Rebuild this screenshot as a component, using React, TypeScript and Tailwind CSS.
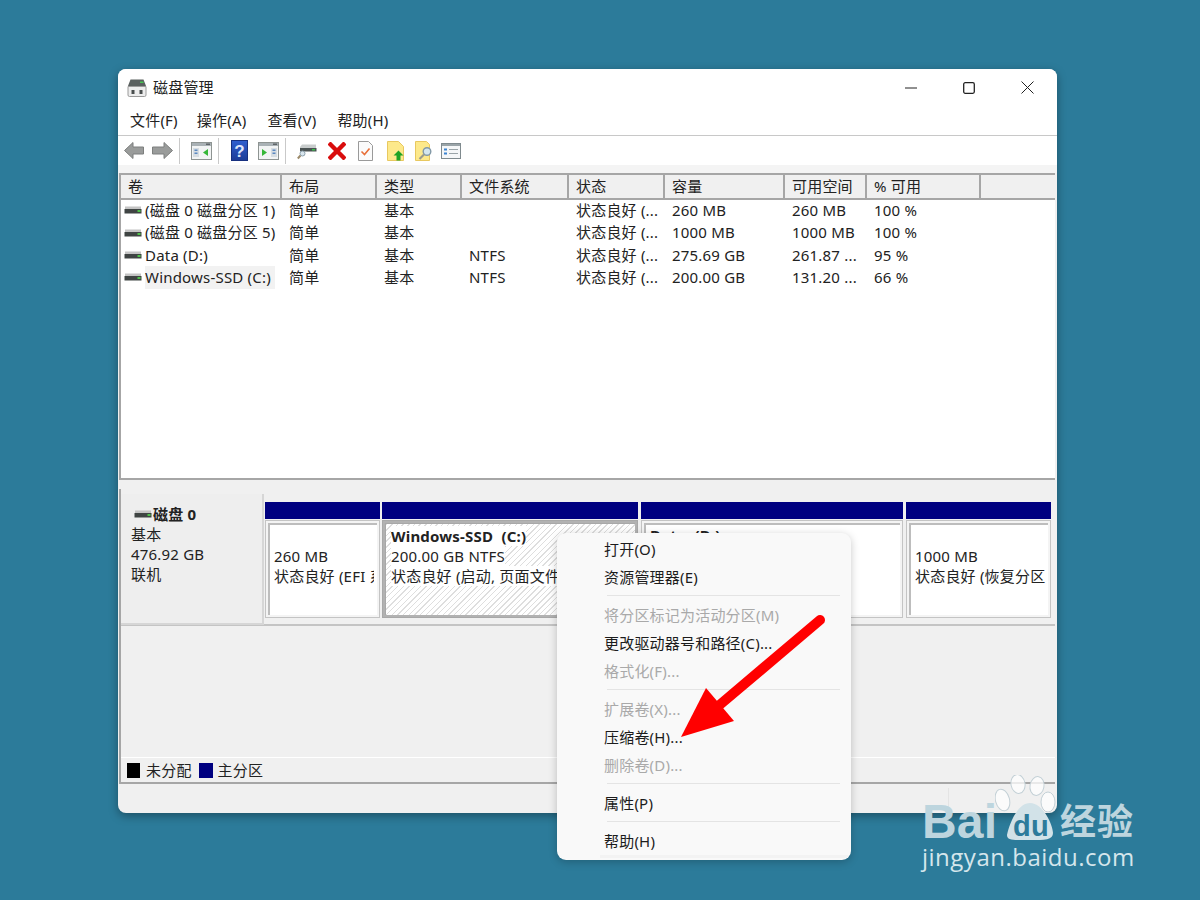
import React from 'react';

const columns = [
  { label: '卷', width: 'w-[161px]' },
  { label: '布局', width: 'w-[95px]' },
  { label: '类型', width: 'w-[85px]' },
  { label: '文件系统', width: 'w-[107px]' },
  { label: '状态', width: 'w-[96px]' },
  { label: '容量', width: 'w-[120px]' },
  { label: '可用空间', width: 'w-[82px]' },
  { label: '% 可用', width: 'w-[114px]' },
  { label: '', width: 'flex-1' },
];

const rows = [
  ['(磁盘 0 磁盘分区 1)', '简单', '基本', '', '状态良好 (...', '260 MB', '260 MB', '100 %'],
  ['(磁盘 0 磁盘分区 5)', '简单', '基本', '', '状态良好 (...', '1000 MB', '1000 MB', '100 %'],
  ['Data (D:)', '简单', '基本', 'NTFS', '状态良好 (...', '275.69 GB', '261.87 ...', '95 %'],
  ['Windows-SSD (C:)', '简单', '基本', 'NTFS', '状态良好 (...', '200.00 GB', '131.20 ...', '66 %'],
];

const menuGroups = [
  [
    { label: '打开(O)' },
    { label: '资源管理器(E)' },
  ],
  [
    { label: '将分区标记为活动分区(M)', disabled: true },
    { label: '更改驱动器号和路径(C)...' },
    { label: '格式化(F)...', disabled: true },
  ],
  [
    { label: '扩展卷(X)...', disabled: true },
    { label: '压缩卷(H)...' },
    { label: '删除卷(D)...', disabled: true },
  ],
  [{ label: '属性(P)' }],
  [{ label: '帮助(H)' }],
];

const DriveIcon = () => (
  <svg width="18" height="8" viewBox="0 0 18 8" className="shrink-0">
    <path d="M1 0.5h16v3H1z" fill="#c4c4c4" />
    <path d="M0.5 3h17v4.5h-17z" fill="#3f4443" />
    <path d="M13.5 4h3v2h-3z" fill="#4fc24a" />
  </svg>
);

const WindowPaneIcon = ({ mirrored = false }: { mirrored?: boolean }) => (
  <svg width="21" height="18" viewBox="0 0 21 18">
    <rect x="0.5" y="0.5" width="20" height="17" fill="#f2f4f4" stroke="#8e9492" />
    <rect x="1" y="1" width="19" height="3" fill="#a9b1b5" />
    <rect x="15" y="1.5" width="4" height="1.5" fill="#5f6568" />
    {mirrored ? (
      <>
        <path d="M4 7l5 3.5L4 14z" fill="#35b737" />
        <path d="M13 6h6v9h-6z" fill="#d6dde2" />
        <path d="M14.5 7.5h3v1.5h-3zM14.5 10.5h3v1.5h-3z" fill="#5a88c0" />
      </>
    ) : (
      <>
        <path d="M2 6h6v9H2z" fill="#d6dde2" />
        <path d="M3.5 7.5h3v1.5h-3zM3.5 10.5h3v1.5h-3z" fill="#5a88c0" />
        <path d="M17 7l-5 3.5L17 14z" fill="#35b737" />
      </>
    )}
  </svg>
);

const Separator = () => <div className="h-[26px] w-px bg-[#c9c9c9]" />;

const Toolbar = () => (
  <div className="flex h-[30px] items-center border-t border-[#c8c8c8] bg-white pl-[6px]">
    <svg width="20" height="17" viewBox="0 0 20 17">
      <path d="M9 0.5L0.5 8.5 9 16.5V12h10.5V5H9z" fill="#9a9c9b" stroke="#7d7f7e" />
    </svg>
    <svg width="21" height="17" viewBox="0 0 21 17" className="ml-[8px]">
      <path d="M12 0.5l8.5 8L12 16.5V12H0.5V5H12z" fill="#9a9c9b" stroke="#7d7f7e" />
    </svg>
    <div className="ml-[6px]"><Separator /></div>
    <div className="ml-[11px] flex"><WindowPaneIcon /></div>
    <div className="ml-[6px]"><Separator /></div>
    <svg width="17" height="21" viewBox="0 0 17 21" className="ml-[12px]">
      <defs>
        <linearGradient id="helpFill" x1="0" y1="0" x2="0" y2="1">
          <stop offset="0" stopColor="#2f5fd0" />
          <stop offset="1" stopColor="#1d3c96" />
        </linearGradient>
      </defs>
      <rect x="0.5" y="0.5" width="16" height="20" fill="url(#helpFill)" stroke="#17307f" />
      <text x="8.5" y="16.5" textAnchor="middle" fontSize="17" fontWeight="700" fill="#dfe6fa" fontFamily="Liberation Sans">?</text>
    </svg>
    <div className="ml-[10px] flex"><WindowPaneIcon mirrored /></div>
    <div className="ml-[6px]"><Separator /></div>
    <svg width="20" height="18" viewBox="0 0 20 18" className="ml-[11px]">
      <path d="M3 5l2-2.5h14V8H3z" fill="#c8cccc" />
      <path d="M3 6h16.5v3.5H3z" fill="#4b5353" />
      <path d="M15 7h3v1.5h-3z" fill="#39c24a" />
      <circle cx="5.5" cy="11.5" r="2.5" fill="#d9e6ee" stroke="#8ba0ad" />
      <path d="M3.5 13.5L0.8 16.5" stroke="#9c8a6a" strokeWidth="2" />
    </svg>
    <svg width="18" height="18" viewBox="0 0 18 18" className="ml-[11px]">
      <path d="M2.5 2.5l13 13M15.5 2.5l-13 13" stroke="#d90d0d" strokeWidth="4.4" strokeLinecap="square" />
    </svg>
    <svg width="15" height="20" viewBox="0 0 15 20" className="ml-[12px]">
      <path d="M0.5 0.5h10l4 4v15H0.5z" fill="#fbfbfb" stroke="#9a9a9a" />
      <path d="M3.5 10.5l3 3 5-6" fill="none" stroke="#e8703a" strokeWidth="1.6" />
    </svg>
    <svg width="17" height="20" viewBox="0 0 17 20" className="ml-[14px]">
      <path d="M0.5 0.5h11l5 5v14H0.5z" fill="#fde98b" stroke="#e8c860" />
      <path d="M11.5 9.5l5 5h-3v5h-4v-5h-3z" fill="#1fa324" />
    </svg>
    <svg width="18" height="20" viewBox="0 0 18 20" className="ml-[11px]">
      <path d="M0.5 0.5h11l3 3v16H0.5z" fill="#fde98b" stroke="#e8c860" />
      <circle cx="12" cy="10.5" r="3.8" fill="#d4e6ee" stroke="#8298a6" strokeWidth="1.4" />
      <path d="M9 13.5L4.5 18" stroke="#9b9b8c" strokeWidth="2.2" />
    </svg>
    <svg width="20" height="16" viewBox="0 0 20 16" className="ml-[8px]">
      <rect x="0.5" y="0.5" width="19" height="15" fill="#f5f7f8" stroke="#7f8a8e" />
      <path d="M1 1h18v2H1z" fill="#9aa4a8" />
      <path d="M3 5.5h3v2H3zM3 9.5h3v2H3z" fill="#3c84d0" />
      <path d="M8 6h9v1H8zM8 10h9v1H8z" fill="#9aa4a8" />
    </svg>
  </div>
);

const VolumeList = () => (
  <div className="flex h-[305px] flex-col border-l-2 border-[#a6a6a6] bg-white">
    <div className="flex h-[27px] shrink-0 border-y-2 border-[#a6a6a6] bg-[#f0f0f0]">
      {columns.map((col) => (
        <div
          key={col.label || 'rest'}
          className={`${col.width} flex items-center border-r-2 border-[#a6a6a6] pl-[7px] leading-none last:border-r-0`}
        >
          {col.label}
        </div>
      ))}
    </div>
    <div className="-mt-px">
      {rows.map((row) => (
        <div key={row[0]} className="flex h-[22.4px] items-center">
          {row.map((cell, i) => (
            <div
              key={i}
              className={`${columns[i].width} flex items-center whitespace-nowrap ${i === 0 ? 'pl-[3px]' : 'pl-[7px]'}`}
            >
              {i === 0 && <DriveIcon />}
              {i === 0 && row[0].startsWith('Windows') ? (
                <span className="ml-[3px] bg-[#f2f2f2] pr-[4px]">{cell}</span>
              ) : (
                <span className={i === 0 ? 'ml-[3px]' : ''}>{cell}</span>
              )}
            </div>
          ))}
        </div>
      ))}
    </div>
  </div>
);

const PartitionCard = ({ width, children, hatched = false }: { width: string; children: React.ReactNode; hatched?: boolean }) => (
  <div className={`${width} flex h-[116px] flex-col`}>
    <div className="h-[17px] bg-[#000080]" />
    <div className={`mt-px min-h-0 flex-1 border p-[2px] ${hatched ? 'border-[#a8a8a8] bg-[#b2b2b2]' : 'border-[#c4c4c4] bg-[#f4f4f4]'}`}>
      <div
        className={`flex h-full flex-col overflow-hidden leading-[20px] whitespace-nowrap ${
          hatched
            ? 'border-l border-t border-[#a8a8a8] bg-[repeating-linear-gradient(135deg,#dedede_0,#dedede_1px,#ffffff_1px,#ffffff_4px)] pl-[5px]'
            : 'border-l-2 border-t-2 border-[#bdbdbd] bg-white pl-[4px]'
        }`}
      >
        {children}
      </div>
    </div>
  </div>
);

const DiskArea = () => (
  <div className="flex h-[295px] flex-col border-b-2 border-l-2 border-[#a6a6a6] bg-[#f0f0f0]">
    <div className="flex h-[137px] shrink-0 border-b-2 border-[#c4c4c4]">
      <div className="mt-[5px] h-[131px] w-[143px] shrink-0 border-r-2 border-b-2 border-[#d6d6d6] bg-[#eeeeee] pl-[10px] pt-[10px] leading-[20px]">
        <div className="flex items-center pl-[3px] font-bold">
          <DriveIcon />
          <span className="ml-px">磁盘 0</span>
        </div>
        <div>基本</div>
        <div>476.92 GB</div>
        <div>联机</div>
      </div>
      <div className="flex gap-[2px] pl-px pt-[13px]">
        <PartitionCard width="w-[115px]">
          <div className="mt-[21px]">260 MB</div>
          <div className="w-[100px] overflow-hidden">状态良好 (EFI 系</div>
        </PartitionCard>
        <PartitionCard width="w-[256px]" hatched>
          <div className="mt-[2px] font-bold"><span className="bg-white">Windows-SSD&nbsp; (C:)</span></div>
          <div><span className="bg-white">200.00 GB NTFS</span></div>
          <div><span className="bg-white">状态良好 (启动, 页面文件</span></div>
        </PartitionCard>
        <PartitionCard width="ml-px w-[262px]">
          <div className="font-bold">Data&nbsp; (D:)</div>
        </PartitionCard>
        <PartitionCard width="ml-px w-[145px]">
          <div className="mt-[21px]">1000 MB</div>
          <div>状态良好 (恢复分区</div>
        </PartitionCard>
      </div>
    </div>
    <div className="flex-1" />
    <div className="flex h-[25px] items-center border-t border-white pl-[6px] pr-[2px] pt-px">
      <div className="h-[15px] w-[13px] bg-black" />
      <span className="ml-[6px]">未分配</span>
      <div className="ml-[7px] h-[15px] w-[14px] bg-[#000080]" />
      <span className="ml-[5px]">主分区</span>
    </div>
  </div>
);

const ContextMenu = () => (
  <div className="absolute left-[557px] top-[533px] w-[294px] rounded-[9px] bg-[#f9f9f9] pt-[2px] shadow-[0_2px_8px_rgba(0,0,0,0.22)]">
    {menuGroups.map((group, i) => (
      <div key={i}>
        {i > 0 && <div className="mt-[4px] mb-[5px] ml-[50px] mr-[11px] h-px bg-[#e4e4e4]" />}
        {group.map((item) => (
          <div
            key={item.label}
            className={`flex h-[28px] items-center pl-[47px] ${i === 4 ? 'mt-[3px]' : ''} ${item.disabled ? 'text-[#a9a9a9]' : 'text-[#1c1c1c]'}`}
          >
            {item.label}
          </div>
        ))}
      </div>
    ))}
    <div className="mb-[2px] ml-[43px] mr-[3px] h-[3px] bg-[#f3f3f3]" />
  </div>
);

const Arrow = () => (
  <svg width="1200" height="900" viewBox="0 0 1200 900" className="pointer-events-none absolute left-0 top-0">
    <path d="M820 620L716 708" stroke="#ff0000" strokeWidth="10" strokeLinecap="round" />
    <path d="M681 737L706 688L723 708L734 721Z" fill="#ff0000" />
  </svg>
);

const Watermark = () => (
  <div className="pointer-events-none absolute left-[920px] top-[772px] h-[100px] w-[230px] text-[#bdd5de]">
    <svg width="70" height="70" viewBox="0 0 70 70" className="absolute left-[75px] top-[3px]">
      <g fill="#ffffff" fillOpacity="0.75" stroke="#c3d0d6" strokeWidth="1">
        <ellipse cx="7.5" cy="25" rx="7" ry="11" transform="rotate(-15 7.5 25)" />
        <ellipse cx="23" cy="9" rx="7" ry="9.5" transform="rotate(-10 23 9)" />
        <ellipse cx="42" cy="11" rx="7" ry="9.5" transform="rotate(10 42 11)" />
        <ellipse cx="53" cy="27" rx="7" ry="10" />
      </g>
      <path d="M12 60C14 50 22 28 35 28C48 28 58 50 58 58C58 65 50 65 35 65C20 65 12 66 12 60Z" fill="#d2e2e8" />
    </svg>
    <div className="absolute left-[2px] top-[30px] text-[48px] font-bold leading-[40px] [font-family:'Liberation_Sans',sans-serif]">
      Bai
    </div>
    <div className="absolute left-[88px] top-[38px] flex h-[32px] w-[46px] items-center justify-center text-[29px] font-bold leading-none text-[#2d7b9b] [font-family:'Liberation_Sans',sans-serif]">
      du
    </div>
    <div className="absolute left-[140px] top-[30px] text-[36px] font-bold leading-[40px] tracking-[1px]">
      经验
    </div>
    <div className="absolute left-[2px] top-[70px] text-[24px] leading-[30px] tracking-[0.5px] text-[#d5e6ec] [font-family:'Open_Sans',sans-serif]">
      jingyan.baidu.com
    </div>
  </div>
);

export default function App() {
  return (
    <div className="relative h-[900px] w-[1200px] overflow-hidden bg-[#2c7b9a] pl-[118px] pt-[69px] text-[15px] tracking-[0.2px] text-[#222222] [font-family:'Noto_Sans','Noto_Sans_CJK_SC',sans-serif]">
      <div className="h-[744px] w-[939px] overflow-hidden rounded-[8px] bg-[#f0f0f0] shadow-[0_3px_10px_rgba(0,0,0,0.35)]">
        <div className="flex h-[37px] items-center bg-white pl-[9px]">
          <svg width="20" height="18" viewBox="0 0 20 18">
            <path d="M3.5 0.5h13L19 7H1z" fill="#5a605f" />
            <path d="M13 2.5h3.5v1.5H13z" fill="#47c653" />
            <path d="M1 7.5h18V16a1.5 1.5 0 0 1-1.5 1.5h-15A1.5 1.5 0 0 1 1 16z" fill="#ededed" stroke="#9a9a9a" />
            <path d="M4.5 11h3v4h-3zM12.5 11h3v4h-3z" fill="#4a4f4f" />
          </svg>
          <span className="ml-[6px]">磁盘管理</span>
          <div className="flex-1" />
          <svg width="12" height="2" viewBox="0 0 12 2" className="mr-[46px]"><path d="M0 1h12" stroke="#222" /></svg>
          <svg width="12" height="12" viewBox="0 0 12 12" className="mr-[46px]"><rect x="0.7" y="0.7" width="10.6" height="10.6" rx="1.5" fill="none" stroke="#222" strokeWidth="1.3" /></svg>
          <svg width="13" height="13" viewBox="0 0 13 13" className="mr-[23px]"><path d="M0.5 0.5l12 12M12.5 0.5l-12 12" stroke="#222" /></svg>
        </div>
        <div className="flex h-[29px] items-center bg-white pl-[12px]">
          <span>文件(F)</span>
          <span className="ml-[19px]">操作(A)</span>
          <span className="ml-[21px]">查看(V)</span>
          <span className="ml-[21px]">帮助(H)</span>
        </div>
        <Toolbar />
        <div className="h-[8px] bg-[#f4f4f4]" />
        <div className="pl-px pr-[2px]">
          <VolumeList />
          <div className="h-[11px] bg-[#f0f0f0] [box-shadow:inset_0_2px_0_#a6a6a6]" />
          <DiskArea />
        </div>
        <div className="ml-[830px] mt-[4px] h-[25px] w-px bg-[#e4e4e4]" />
      </div>
      <ContextMenu />
      <Arrow />
      <Watermark />
    </div>
  );
}
